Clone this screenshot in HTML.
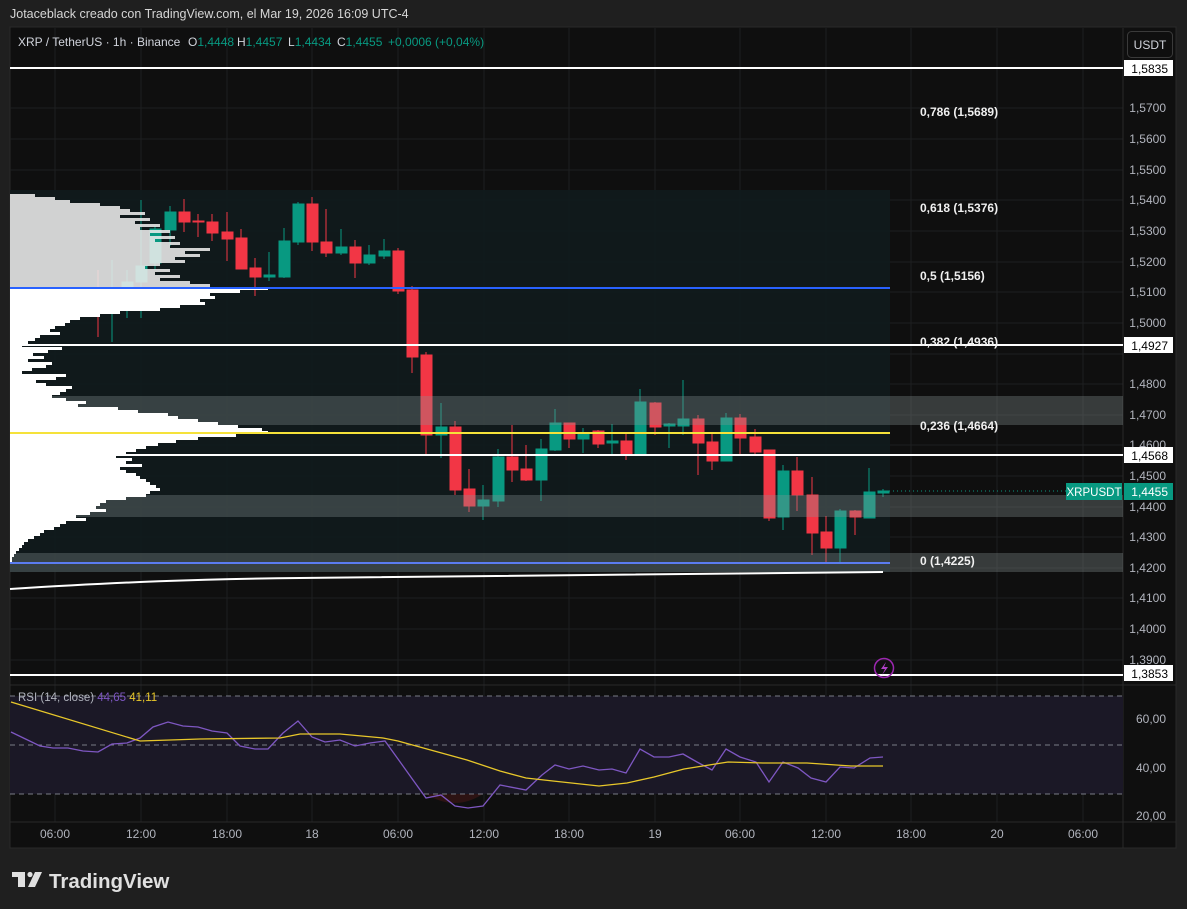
<!DOCTYPE html>
<html><head><meta charset="utf-8"><style>
html,body{margin:0;padding:0;background:#1f1f1f;width:1187px;height:909px;overflow:hidden}
body{font-family:"Liberation Sans",sans-serif}
svg text{font-family:"Liberation Sans",sans-serif}
</style></head><body>
<svg width="1187" height="909" xmlns="http://www.w3.org/2000/svg">
<rect width="1187" height="909" fill="#1f1f1f"/>
<text x="10" y="18" fill="#d6d6d6" font-size="12.5">Jotaceblack creado con TradingView.com, el Mar 19, 2026 16:09 UTC-4</text>
<rect x="10" y="27" width="1166" height="821" fill="#0f0f0f" stroke="#2a2a2a"/>
<g stroke="#1e1f20" stroke-width="1">
<line x1="55" y1="28" x2="55" y2="822"/><line x1="141" y1="28" x2="141" y2="822"/><line x1="227" y1="28" x2="227" y2="822"/><line x1="312" y1="28" x2="312" y2="822"/><line x1="398" y1="28" x2="398" y2="822"/><line x1="484" y1="28" x2="484" y2="822"/><line x1="569" y1="28" x2="569" y2="822"/><line x1="655" y1="28" x2="655" y2="822"/><line x1="740" y1="28" x2="740" y2="822"/><line x1="826" y1="28" x2="826" y2="822"/><line x1="911" y1="28" x2="911" y2="822"/><line x1="997" y1="28" x2="997" y2="822"/><line x1="1083" y1="28" x2="1083" y2="822"/>
<line x1="10" y1="108" x2="1123" y2="108"/><line x1="10" y1="139" x2="1123" y2="139"/><line x1="10" y1="170" x2="1123" y2="170"/><line x1="10" y1="200" x2="1123" y2="200"/><line x1="10" y1="231" x2="1123" y2="231"/><line x1="10" y1="262" x2="1123" y2="262"/><line x1="10" y1="292" x2="1123" y2="292"/><line x1="10" y1="323" x2="1123" y2="323"/><line x1="10" y1="354" x2="1123" y2="354"/><line x1="10" y1="384" x2="1123" y2="384"/><line x1="10" y1="415" x2="1123" y2="415"/><line x1="10" y1="445" x2="1123" y2="445"/><line x1="10" y1="476" x2="1123" y2="476"/><line x1="10" y1="507" x2="1123" y2="507"/><line x1="10" y1="537" x2="1123" y2="537"/><line x1="10" y1="568" x2="1123" y2="568"/><line x1="10" y1="598" x2="1123" y2="598"/><line x1="10" y1="629" x2="1123" y2="629"/><line x1="10" y1="660" x2="1123" y2="660"/>
</g>
<line x1="1123" y1="28" x2="1123" y2="848" stroke="#2a2a2a"/>
<line x1="10" y1="685" x2="1176" y2="685" stroke="#2a2a2a"/>
<line x1="10" y1="822" x2="1176" y2="822" stroke="#2a2a2a"/>
<rect x="10" y="190" width="880" height="382" fill="#111a1c" opacity="0.95"/>
<g stroke-width="1">
<g stroke="#089981" fill="#089981">
<line x1="112" y1="260" x2="112" y2="342"/><rect x="107" y="308" width="11" height="5"/>
<line x1="127" y1="270" x2="127" y2="318"/><rect x="122" y="282" width="11" height="28"/>
<line x1="141" y1="200" x2="141" y2="318"/><rect x="136" y="266" width="11" height="16"/>
<line x1="155" y1="226" x2="155" y2="270"/><rect x="150" y="229" width="11" height="34"/>
<line x1="170" y1="206" x2="170" y2="246"/><rect x="165" y="212" width="11" height="18"/>
<line x1="269" y1="252" x2="269" y2="281"/><rect x="264" y="275" width="11" height="2"/>
<line x1="284" y1="228" x2="284" y2="278"/><rect x="279" y="241" width="11" height="36"/>
<line x1="298" y1="202" x2="298" y2="245"/><rect x="293" y="204" width="11" height="38"/>
<line x1="341" y1="229" x2="341" y2="255"/><rect x="336" y="247" width="11" height="6"/>
<line x1="369" y1="245" x2="369" y2="265"/><rect x="364" y="255" width="11" height="8"/>
<line x1="384" y1="239" x2="384" y2="259"/><rect x="379" y="251" width="11" height="5"/>
<line x1="441" y1="403" x2="441" y2="458"/><rect x="436" y="427" width="11" height="8"/>
<line x1="483" y1="485" x2="483" y2="520"/><rect x="478" y="500" width="11" height="6"/>
<line x1="498" y1="449" x2="498" y2="507"/><rect x="493" y="457" width="11" height="44"/>
<line x1="541" y1="439" x2="541" y2="501"/><rect x="536" y="449" width="11" height="31"/>
<line x1="555" y1="409" x2="555" y2="451"/><rect x="550" y="423" width="11" height="27"/>
<line x1="583" y1="428" x2="583" y2="453"/><rect x="578" y="433" width="11" height="6"/>
<line x1="612" y1="424" x2="612" y2="455"/><rect x="607" y="441" width="11" height="2"/>
<line x1="640" y1="389" x2="640" y2="455"/><rect x="635" y="402" width="11" height="53"/>
<line x1="669" y1="423" x2="669" y2="448"/><rect x="664" y="424" width="11" height="2"/>
<line x1="683" y1="380" x2="683" y2="435"/><rect x="678" y="419" width="11" height="7"/>
<line x1="726" y1="413" x2="726" y2="461"/><rect x="721" y="418" width="11" height="43"/>
<line x1="783" y1="465" x2="783" y2="530"/><rect x="778" y="471" width="11" height="46"/>
<line x1="840" y1="509" x2="840" y2="562"/><rect x="835" y="511" width="11" height="37"/>
<line x1="869" y1="468" x2="869" y2="518"/><rect x="864" y="492" width="11" height="26"/>
<line x1="883" y1="489" x2="883" y2="497"/><rect x="878" y="491" width="11" height="2"/>
</g>
<g stroke="#f23645" fill="#f23645">
<line x1="98" y1="270" x2="98" y2="337"/><rect x="93" y="309" width="11" height="3"/>
<line x1="184" y1="199" x2="184" y2="232"/><rect x="179" y="212" width="11" height="10"/>
<line x1="198" y1="214" x2="198" y2="237"/><rect x="193" y="221" width="11" height="1"/>
<line x1="212" y1="214" x2="212" y2="241"/><rect x="207" y="222" width="11" height="11"/>
<line x1="227" y1="212" x2="227" y2="261"/><rect x="222" y="232" width="11" height="7"/>
<line x1="241" y1="229" x2="241" y2="269"/><rect x="236" y="238" width="11" height="31"/>
<line x1="255" y1="258" x2="255" y2="296"/><rect x="250" y="268" width="11" height="9"/>
<line x1="312" y1="197" x2="312" y2="251"/><rect x="307" y="204" width="11" height="38"/>
<line x1="326" y1="209" x2="326" y2="257"/><rect x="321" y="242" width="11" height="11"/>
<line x1="355" y1="240" x2="355" y2="278"/><rect x="350" y="247" width="11" height="16"/>
<line x1="398" y1="248" x2="398" y2="294"/><rect x="393" y="251" width="11" height="40"/>
<line x1="412" y1="286" x2="412" y2="373"/><rect x="407" y="290" width="11" height="67"/>
<line x1="426" y1="352" x2="426" y2="454"/><rect x="421" y="355" width="11" height="80"/>
<line x1="455" y1="421" x2="455" y2="495"/><rect x="450" y="427" width="11" height="63"/>
<line x1="469" y1="469" x2="469" y2="512"/><rect x="464" y="489" width="11" height="17"/>
<line x1="512" y1="425" x2="512" y2="482"/><rect x="507" y="457" width="11" height="13"/>
<line x1="526" y1="445" x2="526" y2="481"/><rect x="521" y="469" width="11" height="11"/>
<line x1="569" y1="423" x2="569" y2="448"/><rect x="564" y="423" width="11" height="16"/>
<line x1="598" y1="430" x2="598" y2="448"/><rect x="593" y="431" width="11" height="13"/>
<line x1="626" y1="434" x2="626" y2="460"/><rect x="621" y="441" width="11" height="14"/>
<line x1="655" y1="402" x2="655" y2="435"/><rect x="650" y="403" width="11" height="24"/>
<line x1="698" y1="415" x2="698" y2="475"/><rect x="693" y="419" width="11" height="24"/>
<line x1="712" y1="434" x2="712" y2="470"/><rect x="707" y="442" width="11" height="19"/>
<line x1="740" y1="414" x2="740" y2="455"/><rect x="735" y="418" width="11" height="20"/>
<line x1="755" y1="429" x2="755" y2="455"/><rect x="750" y="437" width="11" height="15"/>
<line x1="769" y1="450" x2="769" y2="521"/><rect x="764" y="450" width="11" height="68"/>
<line x1="797" y1="457" x2="797" y2="511"/><rect x="792" y="471" width="11" height="24"/>
<line x1="812" y1="477" x2="812" y2="555"/><rect x="807" y="495" width="11" height="38"/>
<line x1="826" y1="516" x2="826" y2="562"/><rect x="821" y="532" width="11" height="16"/>
<line x1="855" y1="510" x2="855" y2="535"/><rect x="850" y="511" width="11" height="6"/>
</g>
</g>
<rect x="10" y="396" width="1113" height="29" fill="#8a9595" opacity="0.33"/>
<rect x="10" y="495" width="1113" height="22" fill="#8a9595" opacity="0.33"/>
<rect x="10" y="553" width="1113" height="19" fill="#8a9595" opacity="0.33"/>
<path d="M10 194 H35 V197 H55 V200 H70 V203 H100 V206 H120 V209 H130 V212 H145 V215 H120 V218 H150 V221 H135 V224 H160 V227 H140 V230 H170 V233 H150 V236 H175 V239 H155 V242 H180 V245 H170 V248 H210 V251 H185 V254 H200 V257 H175 V260 H185 V263 H160 V266 H145 V269 H170 V272 H155 V275 H180 V278 H160 V281 H190 V284 H210 V287 H10 Z" fill="#ececec" opacity="0.88"/>
<path d="M10 287 H268 V290 H240 V293 H210 V296 H215 V299 H200 V302 H205 V305 H180 V308 H160 V311 H120 V314 H100 V317 H80 V320 H70 V323 H65 V326 H55 V329 H50 V332 H60 V335 H40 V338 H35 V341 H28 V344 H22 V347 H62 V350 H48 V353 H33 V356 H44 V359 H28 V362 H52 V365 H46 V368 H32 V371 H22 V374 H66 V377 H56 V380 H36 V383 H46 V386 H72 V389 H66 V392 H60 V395 H52 V398 H66 V401 H86 V404 H78 V407 H118 V410 H138 V413 H168 V416 H178 V419 H198 V422 H218 V425 H238 V428 H262 V431 H268 V434 H236 V437 H198 V440 H176 V443 H158 V446 H146 V449 H136 V452 H126 V455 H116 V458 H132 V461 H126 V464 H142 V467 H120 V470 H126 V473 H136 V476 H140 V479 H146 V482 H150 V485 H156 V488 H160 V491 H150 V494 H146 V497 H126 V500 H106 V503 H100 V506 H96 V509 H106 V512 H90 V515 H76 V518 H86 V521 H66 V524 H60 V527 H54 V530 H44 V533 H40 V536 H34 V539 H28 V542 H24 V545 H22 V548 H19 V551 H16 V554 H14 V557 H12 V562 H10 Z" fill="#ffffff"/>
<line x1="10" y1="68" x2="1123" y2="68" stroke="#fff" stroke-width="2"/>
<line x1="10" y1="345" x2="1123" y2="345" stroke="#fff" stroke-width="2"/>
<line x1="10" y1="455" x2="1123" y2="455" stroke="#fff" stroke-width="2"/>
<line x1="10" y1="675" x2="1123" y2="675" stroke="#fff" stroke-width="2"/>
<line x1="10" y1="288" x2="890" y2="288" stroke="#2962ff" stroke-width="2"/>
<line x1="10" y1="563" x2="890" y2="563" stroke="#5b7cf0" stroke-width="2"/>
<line x1="10" y1="433" x2="890" y2="433" stroke="#f5e23a" stroke-width="2"/>
<path d="M10 589 C120 582 200 579 300 578 C500 576 700 574 883 572" stroke="#fff" stroke-width="2" fill="none"/>
<line x1="889" y1="491" x2="1066" y2="491" stroke="#089981" stroke-dasharray="1 3"/>
<g fill="#f0f0f0" font-size="12" font-weight="bold">
<text x="920" y="116">0,786 (1,5689)</text><text x="920" y="212">0,618 (1,5376)</text><text x="920" y="280">0,5 (1,5156)</text><text x="920" y="346">0,382 (1,4936)</text><text x="920" y="430">0,236 (1,4664)</text><text x="920" y="565">0 (1,4225)</text>
</g>
<g font-size="12" fill="#d1d4dc">
<text x="18" y="46">XRP / TetherUS · 1h · Binance</text>
<text x="188" y="46">O<tspan fill="#089981">1,4448</tspan></text>
<text x="237" y="46">H<tspan fill="#089981">1,4457</tspan></text>
<text x="288" y="46">L<tspan fill="#089981">1,4434</tspan></text>
<text x="337" y="46">C<tspan fill="#089981">1,4455</tspan></text>
<text x="388" y="46" fill="#089981">+0,0006 (+0,04%)</text>
</g>
<rect x="1127.5" y="31.5" width="45" height="26" rx="4" fill="#0f0f0f" stroke="#3a3a3a"/>
<text x="1150" y="49" font-size="12" fill="#d1d4dc" text-anchor="middle">USDT</text>
<g fill="#b2b5be" font-size="12" text-anchor="end">
<text x="1166" y="112">1,5700</text><text x="1166" y="143">1,5600</text><text x="1166" y="174">1,5500</text><text x="1166" y="204">1,5400</text><text x="1166" y="235">1,5300</text><text x="1166" y="266">1,5200</text><text x="1166" y="296">1,5100</text><text x="1166" y="327">1,5000</text><text x="1166" y="388">1,4800</text><text x="1166" y="419">1,4700</text><text x="1166" y="449">1,4600</text><text x="1166" y="480">1,4500</text><text x="1166" y="511">1,4400</text><text x="1166" y="541">1,4300</text><text x="1166" y="572">1,4200</text><text x="1166" y="602">1,4100</text><text x="1166" y="633">1,4000</text><text x="1166" y="664">1,3900</text>
<text x="1166" y="723">60,00</text><text x="1166" y="772">40,00</text><text x="1166" y="820">20,00</text>
</g>
<g font-size="12" text-anchor="end">
<rect x="1124" y="60" width="49" height="16" fill="#fff"/><text x="1168" y="73" fill="#000">1,5835</text>
<rect x="1124" y="337" width="49" height="16" fill="#fff"/><text x="1168" y="350" fill="#000">1,4927</text>
<rect x="1124" y="447" width="49" height="16" fill="#fff"/><text x="1168" y="460" fill="#000">1,4568</text>
<rect x="1124" y="665" width="49" height="16" fill="#fff"/><text x="1168" y="678" fill="#000">1,3853</text>
<rect x="1066" y="483" width="56" height="17" fill="#089981"/><text x="1094" y="496" fill="#fff" text-anchor="middle" font-size="11.5">XRPUSDT</text>
<rect x="1124" y="483" width="49" height="17" fill="#089981"/><text x="1168" y="496" fill="#fff">1,4455</text>
</g>
<circle cx="884" cy="668" r="9.5" fill="none" stroke="#9c27b0" stroke-width="1.5"/>
<path d="M886 662 L881 669 L885 669 L882 675 L888 667 L884 667 Z" fill="#b040c8"/>
<rect x="10" y="696" width="1113" height="98" fill="#1b1826"/>
<path d="M426 794 Q455 812 483 794 Z" fill="#3a1515" opacity="0.7"/>
<g stroke="#787b86" stroke-dasharray="5 4"><line x1="10" y1="696" x2="1123" y2="696"/><line x1="10" y1="745" x2="1123" y2="745"/><line x1="10" y1="794" x2="1123" y2="794"/></g>
<polyline fill="none" stroke="#7e57c2" stroke-width="1.3" points="11,732 40,746 53,748 68,748 83,751 98,752 112,744 127,743 140,738 153,727 168,722 183,726 198,727 212,731 227,733 240,746 255,749 268,749 283,733 298,721 312,737 325,742 340,740 355,746 370,743 385,741 398,759 413,780 426,798 441,795 455,806 468,808 483,806 500,785 526,790 542,775 555,765 569,769 583,766 599,770 612,769 626,773 640,749 654,757 669,757 683,754 697,762 712,770 726,749 740,757 756,762 769,782 783,762 798,768 811,778 826,782 840,767 854,768 870,758 883,757"/>
<polyline fill="none" stroke="#e8c72a" stroke-width="1.3" points="11,702 140,741 200,739 280,738 300,734 340,734 383,738 398,741 427,749 467,760 500,771 526,778 553,781 599,786 627,783 654,777 684,769 728,762 763,763 807,763 851,766 883,766"/>
<text x="18" y="701" font-size="11.5" fill="#b2b5be">RSI (14, close) <tspan fill="#7e57c2">44,65</tspan> <tspan fill="#e8c72a">41,11</tspan></text>
<g fill="#b2b5be" font-size="12" text-anchor="middle">
<text x="55" y="838">06:00</text><text x="141" y="838">12:00</text><text x="227" y="838">18:00</text><text x="312" y="838">18</text><text x="398" y="838">06:00</text><text x="484" y="838">12:00</text><text x="569" y="838">18:00</text><text x="655" y="838">19</text><text x="740" y="838">06:00</text><text x="826" y="838">12:00</text><text x="911" y="838">18:00</text><text x="997" y="838">20</text><text x="1083" y="838">06:00</text>
</g>
<g fill="#e0e0e0">
<rect x="12" y="872" width="13" height="5"/><rect x="18" y="872" width="7" height="15"/>
<circle cx="30" cy="874.5" r="2.6"/>
<path d="M35 872 L42 872 L35 887 L28 887 Z"/>
</g>
<text x="49" y="888" font-size="20.5" font-weight="bold" fill="#e0e0e0">TradingView</text>
</svg>
</body></html>
